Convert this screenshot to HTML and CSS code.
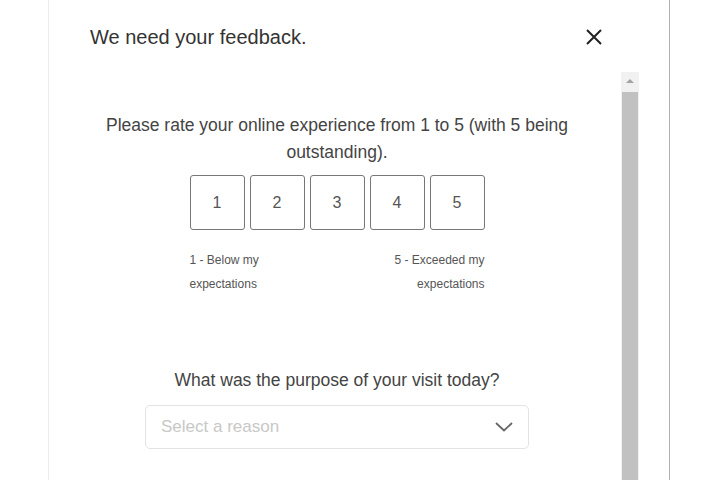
FILE: index.html
```html
<!DOCTYPE html>
<html lang="en">
<head>
  <meta charset="UTF-8" />
  <title>Feedback</title>
  <link rel="stylesheet" href="styles.css">
</head>
<body>
  <div class="panel">
    <div class="header">
      <h2>We need your feedback.</h2>
      <button class="close-btn" aria-label="Close">
        <svg width="16" height="16" viewBox="0 0 16 16"><path d="M1 1 L15 15 M15 1 L1 15" stroke="#222" stroke-width="2" fill="none"/></svg>
      </button>
    </div>

    <div class="body">
      <div class="content">
        <p class="question">Please rate your online experience from 1 to 5 (with 5 being outstanding).</p>
        <div class="rating">
          <div class="scale">
            <button class="score">1</button>
            <button class="score">2</button>
            <button class="score">3</button>
            <button class="score">4</button>
            <button class="score">5</button>
          </div>
          <div class="legend">
            <span class="low">1 - Below my<br>expectations</span>
            <span class="high">5 - Exceeded my<br>expectations</span>
          </div>
        </div>

        <p class="question purpose">What was the purpose of your visit today?</p>
        <div class="select">
          <span class="placeholder">Select a reason</span>
          <svg width="18" height="10" viewBox="0 0 18 10"><path d="M1 1 L9 8.5 L17 1" stroke="#666" stroke-width="1.8" fill="none"/></svg>
        </div>
      </div>

      <div class="scrollbar">
        <div class="arrow"></div>
        <div class="thumb"></div>
      </div>
    </div>
  </div>
</body>
</html>
```

FILE: styles.css
```css
body {
  margin: 0;
  font-family: "Liberation Sans", Arial, sans-serif;
  background-color: #ffffff;
  color: #444;
}

.panel {
  margin-left: 48px;
  width: 620px;
  height: 480px;
  border-left: 1px solid #ececec;
  border-right: 1px solid #b0b0b0;
  display: flex;
  flex-direction: column;
  overflow: hidden;
}

.header {
  display: flex;
  justify-content: space-between;
  align-items: center;
  padding: 24px 67px 0 41px;
  height: 26px;
}

h2 {
  margin: 0;
  font-size: 20px;
  font-weight: normal;
  color: #333;
}

.close-btn {
  border: none;
  background: none;
  padding: 0;
  width: 16px;
  height: 16px;
  cursor: pointer;
}

.body {
  flex: 1;
  display: flex;
  margin-top: 22px;
  padding-right: 30px;
}

.content {
  flex: 1;
  padding-left: 4px;
  display: flex;
  flex-direction: column;
  align-items: center;
}

.question {
  margin: 40px 0 0;
  width: 480px;
  text-align: center;
  font-size: 17.5px;
  line-height: 27px;
  color: #444;
}

.rating {
  width: 295px;
  margin-top: 9px;
}

.scale {
  display: flex;
  gap: 5px;
}

.score {
  width: 55px;
  height: 55px;
  border: 1.5px solid #777;
  border-radius: 3px;
  background: #fff;
  font-family: inherit;
  font-size: 16px;
  color: #555;
  cursor: pointer;
}

.legend {
  display: flex;
  justify-content: space-between;
  margin-top: 18px;
  font-size: 12px;
  line-height: 24px;
  color: #555;
}

.high {
  text-align: right;
}

.purpose {
  margin-top: 71px;
}

.select {
  width: 384px;
  height: 44px;
  margin-top: 11px;
  box-sizing: border-box;
  border: 1px solid #e3e3e3;
  border-radius: 5px;
  display: flex;
  justify-content: space-between;
  align-items: center;
  padding: 0 15px;
}

.placeholder {
  font-size: 17px;
  color: #c8c8c8;
}

.scrollbar {
  width: 18px;
  display: flex;
  flex-direction: column;
  background-color: #f1f1f1;
}

.arrow {
  height: 20px;
  position: relative;
}

.arrow::after {
  content: "";
  position: absolute;
  left: 5px;
  top: 7px;
  border-left: 4px solid transparent;
  border-right: 4px solid transparent;
  border-bottom: 4px solid #a3a3a3;
}

.thumb {
  flex: 1;
  margin: 0 1px;
  background-color: #c1c1c1;
}
```
